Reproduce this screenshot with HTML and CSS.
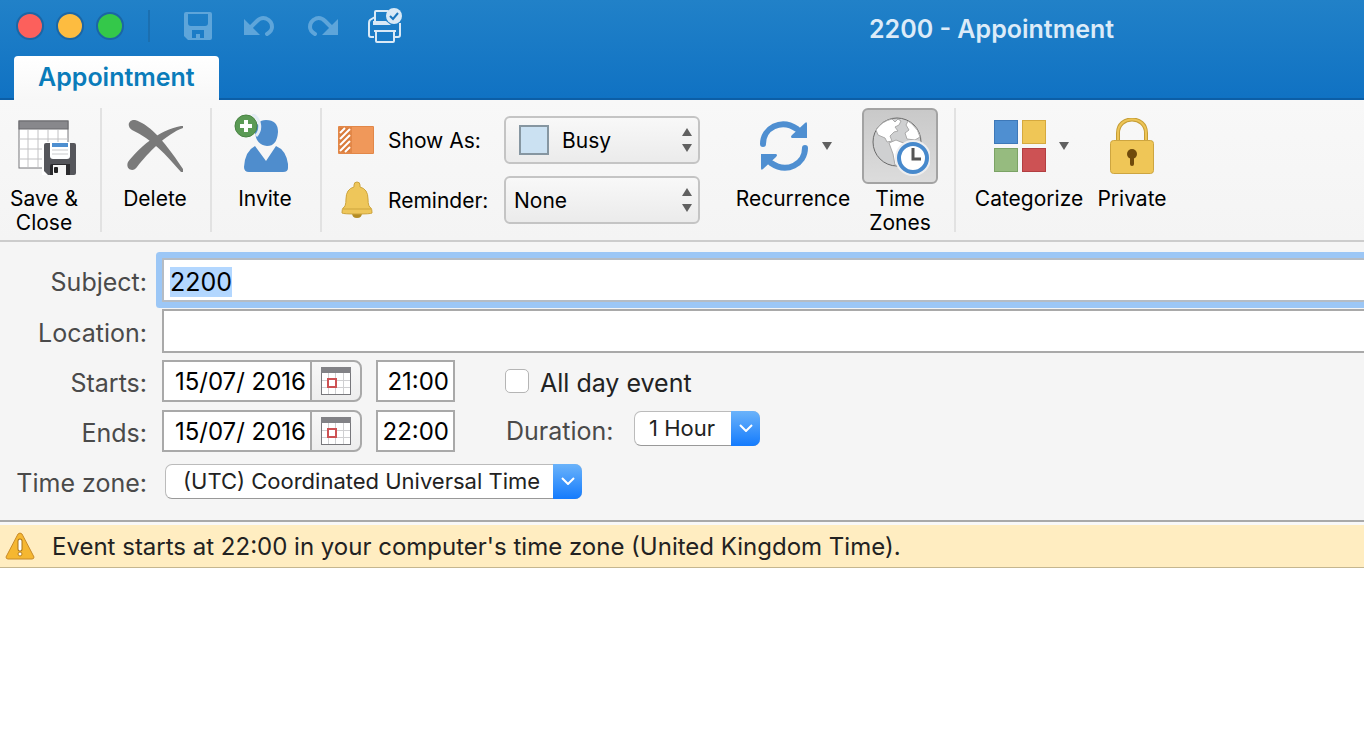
FILE: index.html
```html
<!DOCTYPE html>
<html lang="en">
<head>
<meta charset="utf-8">
<title>2200 - Appointment</title>
<link rel="stylesheet" href="styles.css">
</head>
<body>
<header class="titlebar">
  <div class="titlebar-row">
    <div class="lights">
      <button class="light light-close" aria-label="Close"></button>
      <button class="light light-min" aria-label="Minimize"></button>
      <button class="light light-max" aria-label="Zoom"></button>
    </div>
    <div class="quick">
      <button class="quick-btn" aria-label="Save">
        <svg width="28" height="28" viewBox="0 0 28 28"><path fill="#5ea5da" fill-rule="evenodd" d="M2 0H26Q28 0 28 2V26Q28 28 26 28H4L0 24V2Q0 0 2 0ZM4 2V11Q4 14 7 14H21Q24 14 24 11V2ZM8 18V26H12V22H16V26H20V18Z"/></svg>
      </button>
      <button class="quick-btn" aria-label="Undo">
        <svg width="32" height="20" viewBox="0 0 32 20"><path fill="#5ea5da" d="M0 3V19H16Z"/><path d="M7 11L13 5Q17 1 22 2.500Q28 5 28 11Q28 15 23 18" fill="none" stroke="#5ea5da" stroke-width="4" stroke-linecap="round"/></svg>
      </button>
      <button class="quick-btn" aria-label="Redo">
        <svg width="30" height="20" viewBox="0 0 30 20"><path fill="#5ea5da" d="M30 3V19H14Z"/><path d="M23 11L17 5Q13 1 8 2.500Q2 5 2 11Q2 15 7 18" fill="none" stroke="#5ea5da" stroke-width="4" stroke-linecap="round"/></svg>
      </button>
      <button class="quick-btn" aria-label="Print">
        <svg width="36" height="36" viewBox="0 0 36 36"><g fill="none" stroke="#d9e9f6" stroke-width="2"><path d="M7 15V4Q7 3 8 3H20M7 9L2 12Q1 13 1 15V27Q1 29 3 29H6M32 15V27Q32 29 30 29H27"/><path d="M6 23H28M8 23V33Q8 34 9 34H25Q26 34 26 33V23"/></g><path fill="#d9e9f6" d="M5 13H18L23 17H5Z"/><circle cx="26" cy="8" r="8" fill="#d9e9f6"/><path d="M22 8L25 11L30 5" fill="none" stroke="#1a76bf" stroke-width="2"/></svg>
      </button>
    </div>
    <h1 class="title">2200 - Appointment</h1>
  </div>
  <nav class="tabs"><button class="tab">Appointment</button></nav>
</header>

<section class="ribbon" aria-label="Appointment tools">
  <div class="group group-save">
    <button class="tool">
      <span class="tool-icon">
        <svg width="64" height="60" viewBox="-6 -3 64 60"><rect x="1" y="2" width="49" height="47" fill="#fff" stroke="#77777b"/><path d="M10 11V48M20 11V48M30 11V48M40 11V48M1 20H50M1 30H50M1 40H50" stroke="#c2c2c4"/><rect x="1" y="2" width="49" height="8" fill="#88888c" stroke="#69696d"/><path fill="#fff" d="M24 23H52V56H24Z"/><path d="M28 24H56Q58 24 58 26V54Q58 56 56 56H30L26 52V26Q26 24 28 24Z" fill="#55565b"/><path d="M32 24H52V37Q52 40 49 40H35Q32 40 32 37Z" fill="#fff"/><path d="M34 24H50V28H34Z" fill="#4e8fd0"/><path d="M34 31H50M34 35H50" stroke="#c9cacc" stroke-width="1"/><path d="M32 56V47Q32 45 34 45H52V56Z" fill="#2b2b2e"/><path d="M35 56V46H48V56Z" fill="#f5f5f5"/><rect x="36" y="48" width="4" height="6" rx="1" fill="#222"/></svg>
      </span>
      <span class="tool-label">Save &amp;<br>Close</span>
    </button>
  </div>
  <div class="group group-narrow">
    <button class="tool">
      <span class="tool-icon">
        <svg width="58" height="58" viewBox="0 0 58 58"><path fill="#7a7a7a" d="M9 3C22 7 36 20 57 52V55H55C40 38 26 22 6 13C0 9 3 2 9 3ZM57 9V11C40 17 22 36 11 50C7 56 -1 52 2 45C12 32 32 13 55 9Z"/></svg>
      </span>
      <span class="tool-label">Delete</span>
    </button>
  </div>
  <div class="group group-narrow">
    <button class="tool">
      <span class="tool-icon">
        <svg width="62" height="64" viewBox="2 4 62 64"><path d="M34 10Q46 10 46 22Q45 36 35 36Q24 35 23 22Q24 10 34 10Z" fill="#4f8dcd"/><path d="M23 36L34 51L44 36Q54 40 56 54V58Q56 62 51 62H17Q12 62 12 57Q13 41 23 36Z" fill="#4f8dcd"/><path d="M20 4A14 14 0 0 1 24 26" fill="none" stroke="#e4ecf5" stroke-width="3"/><circle cx="14" cy="16" r="11" fill="#5b9a55" stroke="#478342"/><path d="M14 10V22M8 16H20" stroke="#fff" stroke-width="4"/></svg>
      </span>
      <span class="tool-label">Invite</span>
    </button>
  </div>
  <div class="group-options">
    <svg class="option-icon" width="36" height="30" viewBox="0 0 36 30"><rect x="0" y="1" width="36" height="28" rx="1" fill="#e28748"/><path d="M14 2H35V28H14Z" fill="#f0985a"/><rect x="2" y="3" width="10" height="24" fill="#d97c3b"/><path d="M2 8L7 3M2 14L12 4M2 20L12 10M2 26L12 16M7 27L12 22" stroke="#fff" stroke-width="2"/></svg>
    <label class="option-label" for="show-as">Show As:</label>
    <span class="popup">
      <select id="show-as" class="popup-select popup-swatched"><option>Busy</option></select>
      <span class="swatch"></span>
      <svg class="popup-arrows" width="10" height="24" viewBox="0 0 10 24"><path fill="#606060" d="M5 0L10 8H0ZM5 24L10 16H0Z"/></svg>
    </span>
    <svg class="option-icon" width="36" height="38" viewBox="0 0 36 38"><path d="M14 32H24Q24 37 19 37Q14 37 14 32Z" fill="#b48c24"/><path d="M19 1Q22 1 22 4V6Q30 8 30 18Q30 26 33 27Q34 28 34 32Q33 33 19 33Q5 33 4 32Q4 28 5 27Q8 26 8 18Q8 8 16 6V4Q16 1 19 1Z" fill="#eec65a" stroke="#cda43c"/><path d="M5 28H33" stroke="#cda43c"/></svg>
    <label class="option-label" for="reminder">Reminder:</label>
    <span class="popup">
      <select id="reminder" class="popup-select"><option>None</option></select>
      <svg class="popup-arrows" width="10" height="24" viewBox="0 0 10 24"><path fill="#606060" d="M5 0L10 8H0ZM5 24L10 16H0Z"/></svg>
    </span>
  </div>
  <div class="group group-time">
    <button class="tool tool-wide">
      <span class="tool-icon tool-icon-menu">
        <svg width="50" height="50" viewBox="0 0 50 50"><g fill="none" stroke="#4f8fd1" stroke-width="6" stroke-linecap="round"><path d="M4 23C4 7 22 -3 38 8"/><path d="M46 27C46 43 28 53 12 42"/></g><path d="M46 2Q48 0 48 3V17H33Q31 16 33 14Z M4 48Q2 50 2 47V33H17Q19 34 17 36Z" fill="#4f8fd1"/></svg>
        <svg class="caret" width="10" height="8" viewBox="0 0 10 8"><path fill="#606060" d="M0 0H10L5 8Z"/></svg>
      </span>
      <span class="tool-label">Recurrence</span>
    </button>
    <button class="tool tool-zones" aria-pressed="true">
      <span class="tool-icon tool-pressed">
        <svg width="60" height="60" viewBox="0 0 60 60"><circle cx="27" cy="26" r="24" fill="#cfd0d1" stroke="#696969"/><path d="M6 14Q12 5 22 3L25 6L28 3L31 5L29 9L25 11L28 15L24 16L20 20L22 25L17 26L15 22L8 19Z M38 5L42 8Q49 14 50 21L45 24L37 23L35 17L39 14L36 9Z M19 27L26 24L36 28L38 36L32 49H25L23 38Z" fill="#fff" stroke="#aaa"/><circle cx="43" cy="42" r="18" fill="#eeeeef"/><circle cx="43" cy="42" r="14" fill="#fff" stroke="#4789cc" stroke-width="4"/><path d="M43 32V43H51" fill="none" stroke="#555" stroke-width="3"/></svg>
      </span>
      <span class="tool-label">Time<br>Zones</span>
    </button>
  </div>
  <div class="group group-tags">
    <button class="tool tool-wide">
      <span class="tool-icon tool-icon-menu">
        <svg width="52" height="52" viewBox="0 0 52 52"><rect x=".5" y=".5" width="23" height="23" fill="#4f8fd1" stroke="#3d78b8"/><rect x="28.500" y=".5" width="23" height="23" fill="#efc656" stroke="#d5a93e"/><rect x=".5" y="28.500" width="23" height="23" fill="#96bb7f" stroke="#7ba365"/><rect x="28.500" y="28.500" width="23" height="23" fill="#cd5254" stroke="#b23e41"/></svg>
        <svg class="caret" width="10" height="8" viewBox="0 0 10 8"><path fill="#606060" d="M0 0H10L5 8Z"/></svg>
      </span>
      <span class="tool-label">Categorize</span>
    </button>
    <button class="tool tool-private">
      <span class="tool-icon">
        <svg width="44" height="56" viewBox="0 0 44 56"><path d="M8 25V15C8 -3 36 -3 36 15V25" fill="none" stroke="#c59d35" stroke-width="4"/><path d="M8 25V15C8 -3 36 -3 36 15V25" fill="none" stroke="#edc456" stroke-width="2"/><rect x=".5" y="22.500" width="43" height="33" rx="3" fill="#efc657" stroke="#cda540"/><circle cx="22" cy="36" r="5" fill="#6f4a0b"/><path d="M22 37V46" stroke="#6f4a0b" stroke-width="4" stroke-linecap="round"/></svg>
      </span>
      <span class="tool-label">Private</span>
    </button>
  </div>
</section>

<form class="form">
  <label class="form-label" for="subject">Subject:</label>
  <input class="text-field subject" id="subject" value="2200" autocomplete="off">

  <label class="form-label" for="location">Location:</label>
  <input class="text-field" id="location" autocomplete="off">

  <label class="form-label" for="start-date">Starts:</label>
  <div class="form-line">
    <input class="date-field" id="start-date" value="15/07/ 2016">
    <button class="date-btn" type="button" aria-label="Choose start date">
      <svg width="30" height="30" viewBox="0 0 30 30"><rect x=".5" y="1.500" width="29" height="27" fill="#fff" stroke="#77777b"/><path d="M7.500 7V28M14.500 7V28M22.500 7V28M1 14.500H29M1 21.500H29" stroke="#d0d0d2"/><rect x="0" y="1" width="30" height="6" fill="#828286"/><rect x="7" y="13" width="8" height="8" fill="#fff" stroke="#cd5254" stroke-width="2"/></svg>
    </button>
    <input class="time-field" aria-label="Start time" value="21:00">
    <input class="check" type="checkbox" id="all-day">
    <label class="check-label" for="all-day">All day event</label>
  </div>

  <label class="form-label" for="end-date">Ends:</label>
  <div class="form-line">
    <input class="date-field" id="end-date" value="15/07/ 2016">
    <button class="date-btn" type="button" aria-label="Choose end date">
      <svg width="30" height="30" viewBox="0 0 30 30"><rect x=".5" y="1.500" width="29" height="27" fill="#fff" stroke="#77777b"/><path d="M7.500 7V28M14.500 7V28M22.500 7V28M1 14.500H29M1 21.500H29" stroke="#d0d0d2"/><rect x="0" y="1" width="30" height="6" fill="#828286"/><rect x="7" y="13" width="8" height="8" fill="#fff" stroke="#cd5254" stroke-width="2"/></svg>
    </button>
    <input class="time-field" aria-label="End time" value="22:00">
    <label class="duration-label" for="duration">Duration:</label>
    <span class="combo combo-duration">
      <select id="duration" class="combo-select"><option>1 Hour</option></select>
      <span class="combo-cap"><svg width="14" height="8" viewBox="0 0 14 8"><path d="M1 1L7 7L13 1" fill="none" stroke="#fff" stroke-width="2"/></svg></span>
    </span>
  </div>

  <label class="form-label" for="zone">Time zone:</label>
  <div class="form-line">
    <span class="combo combo-zone">
      <select id="zone" class="combo-select"><option>(UTC) Coordinated Universal Time</option></select>
      <span class="combo-cap"><svg width="14" height="8" viewBox="0 0 14 8"><path d="M1 1L7 7L13 1" fill="none" stroke="#fff" stroke-width="2"/></svg></span>
    </span>
  </div>
</form>

<p class="notice">
  <svg width="30" height="28" viewBox="0 0 30 28"><path d="M13 2Q15 0 17 2L29 25Q29 27 27 27H3Q1 27 1 25Z" fill="#f5b731" stroke="#c88a28"/><path d="M15 9V17" stroke="#a97419" stroke-width="5" stroke-linecap="round"/><path d="M15 9V17" stroke="#fff" stroke-width="3" stroke-linecap="round"/><circle cx="15" cy="22" r="2" fill="#fff" stroke="#b77f1c"/></svg>
  <span>Event starts at 22:00 in your computer's time zone (United Kingdom Time).</span>
</p>
<script src="script.js"></script>
</body>
</html>
```

FILE: styles.css
```css
* { box-sizing: border-box; }

body {
  margin: 0;
  background: #fff;
  color: #000;
  font-family: Inter, "Liberation Sans", sans-serif;
  font-size: 21px;
  overflow-x: hidden;
}

button, input, select { font: inherit; color: inherit; margin: 0; }

/* Title bar */
.titlebar {
  background: linear-gradient(#2181c8, #1072c3);
  border-bottom: 2px solid #0c5ea6;
}
.titlebar-row { display: flex; align-items: center; height: 56px; padding-left: 16px; }
.lights {
  display: flex;
  gap: 12px;
  height: 32px;
  margin-bottom: 4px;
  align-items: center;
  padding-right: 24px;
  border-right: 2px solid #1b6fb0;
}
.light { width: 28px; height: 28px; padding: 0; border-radius: 50%; border: 2px solid #1b66a5; }
.light-close { background: #fc605c; }
.light-min { background: #fdbc40; }
.light-max { background: #34c84a; }
.quick { display: flex; align-items: center; gap: 32px; margin: 0 0 4px 34px; }
.quick-btn { display: flex; padding: 0; border: 0; background: none; }
.quick-btn:last-child { margin-left: -2px; }
.title { margin: 2px 0 0 465px; font-size: 25px; line-height: 32px; font-weight: 600; color: #dcebf8; white-space: nowrap; }
.tabs { padding-left: 14px; margin-bottom: -2px; display: flex; }
.tab {
  height: 44px;
  padding: 0 24px 3px;
  border: 0;
  border-radius: 4px 4px 0 0;
  background: linear-gradient(#fff, #f7f7f7);
  color: #0a7cba;
  font-size: 25px;
  font-weight: 600;
}

/* Ribbon */
.ribbon {
  display: flex;
  align-items: flex-start;
  padding: 8px 0 5px;
  background: linear-gradient(#f8f8f8, #f4f4f4);
  border-bottom: 2px solid #ccc;
}
.group { display: flex; height: 124px; border-right: 2px solid #e2e2e2; margin-bottom: 3px; }
.group-save { width: 102px; padding-right: 12px; }
.group-narrow { width: 110px; padding-right: 2px; }
.tool {
  flex: 1;
  display: flex;
  flex-direction: column;
  align-items: center;
  gap: 3px;
  padding: 0;
  border: 0;
  background: none;
}
.tool-icon { flex: none; display: flex; align-items: center; justify-content: center; width: 76px; height: 76px; }
.tool-icon-menu { width: 114px; gap: 13px; padding-left: 4px; }
.tool-label { line-height: 24px; white-space: nowrap; }
.tool-pressed {
  border: 2px solid #a3a3a3;
  border-radius: 6px;
  background: linear-gradient(#c9c9c9, #dcdcdc);
}
.group-options {
  display: grid;
  grid-template-columns: 36px 104px 194px;
  grid-template-rows: 48px 48px;
  row-gap: 12px;
  column-gap: 14px;
  align-items: center;
  padding: 8px 0 0 16px;
}
.option-label { white-space: nowrap; }
.popup { position: relative; display: flex; align-items: center; margin-left: -2px; }
.popup-select {
  appearance: none;
  width: 100%;
  height: 48px;
  padding: 0 30px 0 8px;
  border: 2px solid #c4c4c4;
  border-radius: 6px;
  background: linear-gradient(#f8f8f8, #ebebeb);
}
.popup-swatched { padding-left: 56px; }
.swatch {
  position: absolute;
  left: 15px;
  width: 30px;
  height: 30px;
  background: #cbe1f2;
  border: 2px solid #8696a1;
  pointer-events: none;
}
.popup-arrows { position: absolute; right: 8px; pointer-events: none; }
.group-time { width: 256px; padding: 0 16px 0 36px; }
.group-time .tool-wide { flex: none; width: 114px; }
.tool-zones { flex: none; width: 76px; margin-left: 12px; }
.group-tags { padding-left: 18px; border: 0; gap: 12px; }
.group-tags .tool-wide { flex: none; width: 110px; }
.tool-private { flex: none; width: 72px; }

/* Details form */
.form {
  display: grid;
  grid-template-columns: 147px 1fr;
  grid-template-rows: 52px 50px 50px 50px 50px;
  column-gap: 15px;
  align-items: center;
  padding: 12px 0 14px;
  background: #f5f5f5;
  border-bottom: 2px solid #a9a9a9;
  font-size: 25px;
  color: #4a4a4a;
}
.form-label { text-align: right; white-space: nowrap; padding-top: 4px; }
.text-field {
  width: 100%;
  height: 44px;
  padding: 4px 6px 0;
  border: 2px solid #a9a9a9;
  border-right: 0;
  border-radius: 0;
  background: #fff;
  color: #000;
  outline: 0;
}
.subject { border-color: #b5bcc4; box-shadow: 0 0 0 6px #9cc7f6; border-radius: 1px; }
.subject::selection { background: #b3d7ff; color: #000; }
.form-line { display: flex; align-items: center; color: #222; }
.date-field, .time-field {
  height: 42px;
  border: 2px solid #a9a9a9;
  border-radius: 0;
  background: #fff;
  color: #000;
  font-size: 24px;
}
.date-field { width: 150px; padding: 0 4px 0 0; text-align: right; }
.date-btn {
  display: flex;
  align-items: center;
  justify-content: center;
  width: 52px;
  height: 42px;
  margin-left: -2px;
  padding: 0;
  border: 2px solid #a9a9a9;
  border-radius: 0 8px 8px 0;
  background: linear-gradient(#f8f8f8, #ededed);
}
.time-field { width: 79px; margin-left: 14px; padding: 0 4px 0 0; text-align: right; }
.check {
  appearance: none;
  width: 24px;
  height: 24px;
  margin-left: 50px;
  border: 1px solid #b5b5b5;
  border-radius: 5px;
  background: #fff;
}
.check-label { margin-left: 11px; padding-top: 4px; }
.duration-label { margin-left: 51px; width: 112px; color: #4a4a4a; }
.combo { position: relative; display: flex; height: 35px; }
.combo-select {
  appearance: none;
  width: 100%;
  padding: 0 30px 0 14px;
  border: 1px solid #bbb;
  border-bottom-color: #999;
  border-radius: 7px;
  background: #fff;
  color: #222;
  font-size: 22px;
}
.combo-duration { width: 126px; margin: 0 0 6px 16px; }
.combo-zone { width: 417px; margin-left: 3px; }
.combo-zone .combo-select { padding-left: 17px; }
.combo-cap {
  position: absolute;
  top: 0;
  right: 0;
  bottom: 0;
  width: 29px;
  display: flex;
  align-items: center;
  justify-content: center;
  border-radius: 0 7px 7px 0;
  background: linear-gradient(#6bb3fa, #147bfd);
  pointer-events: none;
}

/* Time zone notice */
.notice {
  display: flex;
  align-items: center;
  gap: 17px;
  height: 46px;
  margin: 0;
  padding-left: 5px;
  background: #ffedc1;
  border-top: 3px solid #f8f8f8;
  border-bottom: 1px solid #c5b68f;
  font-size: 24px;
  color: #222;
  white-space: nowrap;
}
```

FILE: script.js
```js
const subject = document.getElementById('subject');
subject.focus();
subject.select();
```
